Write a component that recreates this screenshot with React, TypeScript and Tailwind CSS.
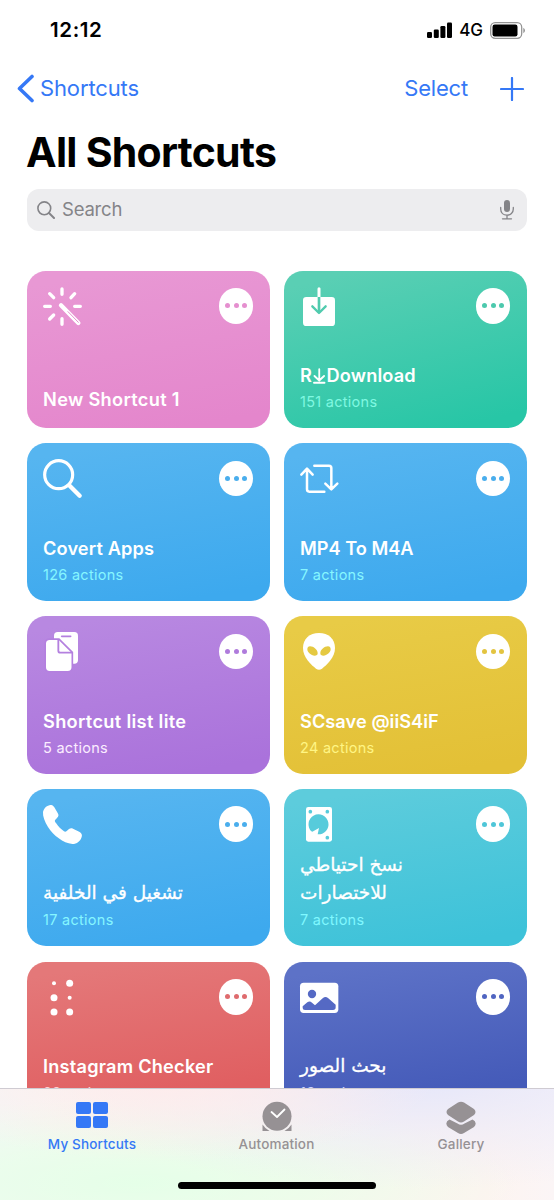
import type { ReactNode } from "react";

const inter = "font-['Inter','Liberation_Sans',sans-serif]";

function Glyph({ children }: { children: ReactNode }) {
  return (
    <svg viewBox="0 0 117 117" className="block h-[39px] w-[39px] overflow-visible" fill="white" stroke="none">
      {children}
    </svg>
  );
}

const round = { fill: "none", strokeLinecap: "round", strokeLinejoin: "round" } as const;

const Wand = () => (
  <Glyph>
    <path {...round} stroke="white" strokeWidth="10" d="M57 6V22M57 95V112M5 58H22M95 58H112M20 20L32 32M95 20L84 32M32 84L20 96" />
    <path {...round} stroke="white" strokeWidth="13" d="M54 55L106 108" />
    <path {...round} stroke="#e68fcf" strokeWidth="3" d="M75 74L106 106" />
  </Glyph>
);

const Download = () => (
  <Glyph>
    <rect x="9" y="30" width="96" height="87" rx="10" />
    <path {...round} stroke="white" strokeWidth="9" d="M57 5V30" />
    <path fill="none" stroke="#50cbae" strokeWidth="8" d="M57 30V78" />
    <path {...round} stroke="#50cbae" strokeWidth="7" d="M37 58L57 78L77 58" />
  </Glyph>
);

const Magnifier = () => (
  <Glyph>
    <circle cx="47" cy="47" r="42" fill="none" stroke="white" strokeWidth="9.5" />
    <path {...round} stroke="white" strokeWidth="13" d="M80 80L110 110" />
  </Glyph>
);

const Repeat = () => (
  <Glyph>
    <path {...round} stroke="white" strokeWidth="7.500" d="M4 47L21 29L38 47M21 30V91Q21 98 28 98H73M43 20H87Q94 20 94 27V90M76 74L94 91L112 74" />
  </Glyph>
);

const Docs = () => (
  <Glyph>
    <rect x="33" y="0" width="72" height="95" rx="11" />
    <path {...round} stroke="#b480df" strokeWidth="5" d="M56 13H83" />
    <path stroke="#b480df" strokeWidth="5" d="M20 21.500H48L88 61V106Q88 119.500 74 119.500H20Q6.500 119.500 6.500 106V35Q6.500 21.500 20 21.500Z" />
    <path {...round} stroke="#b480df" strokeWidth="5.500" d="M46 24V56Q46 62 52 62H86" />
  </Glyph>
);

const Alien = () => (
  <Glyph>
    <path d="M57 3C85 3 105 20 105 48C105 76 80 99 66 110Q57 116 48 110C34 99 9 76 9 48C9 20 29 3 57 3Z" />
    <path fill="#e5c941" d="M30 43C41 43 53 54 53 63C54 69 49 71 44 71C33 71 22 61 22 52C22 46 25 43 30 43ZM84 43C73 43 61 54 61 63C60 69 65 71 70 71C81 71 92 61 92 52C92 46 89 43 84 43Z" />
  </Glyph>
);

const Phone = () => (
  <Glyph>
    <path d="M23 0C28-1 31 2 34 7L44 24C48 30 47 34 42 39L37 44C34 47 36 50 39 54C46 65 54 72 63 79C66 81 69 80 72 77L78 72C82 69 86 69 90 71L110 81C116 85 118 90 116 96C112 109 102 117 88 117C60 114 32 92 15 66C5 50-1 34 0 21C3 9 12 1 23 0Z" />
  </Glyph>
);

const Disk = () => (
  <Glyph>
    <rect x="18" y="6" width="78" height="104" rx="7" />
    <g fill="#57cbdb">
      <circle cx="31" cy="20" r="5.500" />
      <circle cx="82" cy="20" r="5.500" />
      <circle cx="82" cy="98" r="5.500" />
      <path d="M34 79A30 30 0 1 1 53 88L57 69L37 80Z" />
    </g>
  </Glyph>
);

const Braille = () => (
  <Glyph>
    <circle cx="33" cy="16" r="6" />
    <circle cx="80" cy="16" r="10.500" />
    <circle cx="33" cy="59" r="10.500" />
    <circle cx="80" cy="59" r="6" />
    <circle cx="33" cy="102" r="10.500" />
    <circle cx="80" cy="102" r="10.500" />
  </Glyph>
);

const Picture = () => (
  <Glyph>
    <rect x="0" y="14" width="115" height="91" rx="11" />
    <circle cx="36" cy="48" r="12.500" fill="#5569c4" />
    <path fill="#5569c4" d="M8 85L22 73Q29 67 36 74L45 82L68 61Q76 54 84 60L107 80V88Q107 96 99 96H15Q8 96 8 90Z" />
  </Glyph>
);

type Card = {
  name: string;
  size: string;
  label: ReactNode;
  count?: string;
  countColor?: string;
  bg: string;
  dots: string;
  icon: ReactNode;
};

const latin = "text-[18.200px] leading-[27px] font-semibold";
const arabic = "font-['DejaVu_Sans',sans-serif] text-[18.500px] leading-[28px] font-normal [-webkit-text-stroke:0.3px_white]";

const DownArrow = () => (
  <svg viewBox="0 0 13 16" className="mx-[1px] inline-block h-[16px] w-[12.500px] align-[-2px]" fill="none" stroke="white" strokeWidth="1.900" strokeLinecap="round" strokeLinejoin="round">
    <path d="M6.500 1V12.500M1.500 8L6.500 12.700L11.500 8M1 15H12" />
  </svg>
);

const cards: Card[] = [
  { name: "new", size: `${latin} tracking-[0.320px]`, label: "New Shortcut 1", bg: "bg-[linear-gradient(170deg,#e898d4_8%,#e486cc_92%)]", dots: "bg-[#e58fcf]", icon: <Wand /> },
  { name: "download", size: `${latin} tracking-[0.150px]`, label: <>R<DownArrow />Download</>, count: "151 actions", countColor: "text-[#80f8e1]", bg: "bg-[linear-gradient(165deg,#5acfb4_8%,#27c6a6_92%)]", dots: "bg-[#4cc9ad]", icon: <Download /> },
  { name: "covert", size: `${latin} tracking-[0.130px]`, label: "Covert Apps", count: "126 actions", countColor: "text-[#86f6ff]", bg: "bg-[linear-gradient(170deg,#56b5f0_8%,#3da9ee_92%)]", dots: "bg-[#4aaeed]", icon: <Magnifier /> },
  { name: "mp4", size: `${latin} tracking-[0px]`, label: "MP4 To M4A", count: "7 actions", countColor: "text-[#86f6ff]", bg: "bg-[linear-gradient(170deg,#56b5f0_8%,#3da9ee_92%)]", dots: "bg-[#4aaeed]", icon: <Repeat /> },
  { name: "list", size: `${latin} tracking-[0.320px]`, label: "Shortcut list lite", count: "5 actions", countColor: "text-[#fbedff]", bg: "bg-[linear-gradient(170deg,#b888e1_8%,#aa72db_92%)]", dots: "bg-[#af7bdc]", icon: <Docs /> },
  { name: "scsave", size: `${latin} tracking-[0.050px]`, label: "SCsave @iiS4iF", count: "24 actions", countColor: "text-[#fff584]", bg: "bg-[linear-gradient(170deg,#e8cb46_8%,#e3c036_92%)]", dots: "bg-[#e3c440]", icon: <Alien /> },
  { name: "background", size: arabic, label: "تشغيل في الخلفية", count: "17 actions", countColor: "text-[#86f6ff]", bg: "bg-[linear-gradient(170deg,#56b5f0_8%,#3da9ee_92%)]", dots: "bg-[#4aaeed]", icon: <Phone /> },
  { name: "backup", size: arabic, label: <>نسخ احتياطي<br />للاختصارات</>, count: "7 actions", countColor: "text-[#80f8ff]", bg: "bg-[linear-gradient(170deg,#5dccdc_8%,#3dc2d9_92%)]", dots: "bg-[#4fc6d8]", icon: <Disk /> },
  { name: "instagram", size: `${latin} tracking-[0.220px]`, label: "Instagram Checker", count: "23 actions", countColor: "text-[#ffd0d0]", bg: "bg-[linear-gradient(170deg,#e47879_8%,#e05f61_80%)]", dots: "bg-[#df6b6e]", icon: <Braille /> },
  { name: "photos", size: arabic, label: "بحث الصور", count: "13 actions", countColor: "text-[#ccd5ff]", bg: "bg-[linear-gradient(170deg,#5d72c7_8%,#455bb9_80%)]", dots: "bg-[#5065c1]", icon: <Picture /> },
];

function ShortcutCard({ card }: { card: Card }) {
  return (
    <article className={`flex flex-col justify-between rounded-[19px] px-4 pt-4 ${card.count ? "pb-[15px]" : "pb-[15px]"} ${card.bg}`}>
      <div className="flex items-start justify-between">
        {card.icon}
        <button aria-label="More" className="mt-[1.500px] mr-[0.700px] flex h-[35.500px] w-[34.500px] items-center justify-center gap-[3.200px] rounded-[50%] bg-white">
          <i className={`h-[5px] w-[5px] rounded-full ${card.dots}`} />
          <i className={`h-[5px] w-[5px] rounded-full ${card.dots}`} />
          <i className={`h-[5px] w-[5px] rounded-full ${card.dots}`} />
        </button>
      </div>
      <div>
        <h2 className={`whitespace-nowrap text-white ${card.size}`}>{card.label}</h2>
        {card.count && <p className={`mt-[2px] text-[14.500px] leading-[22px] tracking-[0.280px] ${card.countColor}`}>{card.count}</p>}
      </div>
    </article>
  );
}

export default function App() {
  return (
    <div className={`flex h-[1200px] w-[554px] flex-col overflow-hidden bg-white text-black ${inter}`}>
      <header className="flex h-[60px] shrink-0 items-center justify-between pr-[29px] pl-[50px]">
        <span className="pt-[1px] text-[20.500px] font-semibold tracking-[0.600px]">12:12</span>
        <div className="flex items-center">
          <svg viewBox="0 0 25 17" className="h-[17px] w-[25px]">
            <rect x="0" y="10" width="5" height="6" rx="1.200" />
            <rect x="6.800" y="7.500" width="5" height="8.500" rx="1.200" />
            <rect x="13.400" y="4" width="5" height="12" rx="1.200" />
            <rect x="20" y="0.500" width="5" height="15.500" rx="1.200" />
          </svg>
          <span className="mx-[7px] pt-[2px] text-[17px] font-medium">4G</span>
          <svg viewBox="0 0 35 17" className="h-[17px] w-[35px]">
            <rect x="0.700" y="0.700" width="31" height="15.600" rx="4.500" fill="white" stroke="#949494" strokeWidth="1.300" />
            <rect x="2.500" y="2.500" width="25" height="12" rx="2.200" />
            <path d="M33.300 5.800Q35 7 35 8.500T33.300 11.200Z" fill="#949494" />
          </svg>
        </div>
      </header>

      <nav className="flex h-[57px] shrink-0 items-center justify-between pr-[30px] pl-[17px] text-[#3578f6]">
        <a className="flex items-center gap-[6px] text-[22px] tracking-[-0.130px]">
          <svg viewBox="0 0 17 29" className="h-[29px] w-[17px]" fill="none" stroke="currentColor" strokeWidth="3.600" strokeLinecap="round" strokeLinejoin="round">
            <path d="M15 2.500L2.500 14.500L15 26.500" />
          </svg>
          Shortcuts
        </a>
        <div className="flex items-center gap-[32px] text-[22px] tracking-[-0.200px]">
          <span>Select</span>
          <svg viewBox="0 0 24 24" className="h-6 w-6" fill="none" stroke="currentColor" strokeWidth="2.200" strokeLinecap="round">
            <path d="M12 1V23M1 12H23" />
          </svg>
        </div>
      </nav>

      <h1 className="flex h-[72px] shrink-0 items-center pl-[26px] text-[41px] font-bold tracking-[-0.720px]">All Shortcuts</h1>

      <label className="mx-[27px] flex h-[41.500px] shrink-0 items-center rounded-[12px] bg-[#ededef] px-[10px] text-[#848488]">
        <svg viewBox="0 0 18 18" className="h-[18px] w-[18px]" fill="none" stroke="currentColor" strokeWidth="1.600" strokeLinecap="round">
          <circle cx="7.300" cy="7.300" r="6.400" />
          <path strokeWidth="2" d="M12 12L17 17" />
        </svg>
        <span className="ml-[7px] flex-1 pt-[1px] text-[18.500px] tracking-[-0.200px]">Search</span>
        <svg viewBox="0 0 14 21" className="mr-[3px] h-[21px] w-[14px]" fill="none" stroke="currentColor" strokeWidth="1.300" strokeLinecap="round">
          <rect x="4" y="1" width="6" height="12" rx="3" fill="currentColor" stroke="none" />
          <path d="M0.700 8.500V10C0.700 14 3.500 16.200 7 16.200S13.300 14 13.300 10V8.500M7 16.500V19.800M2.500 19.800H11.500" />
        </svg>
      </label>

      <main className="mt-[40px] grid min-h-0 flex-1 auto-rows-[157.500px] grid-cols-2 gap-x-[14px] gap-y-[15.300px] overflow-hidden px-[27px]">
        {cards.map((card) => (
          <ShortcutCard key={card.name} card={card} />
        ))}
      </main>

      <footer className="flex h-[112px] shrink-0 flex-col items-center justify-between border-t border-[#cfcbd2] bg-[radial-gradient(ellipse_at_30%_-15%,#ffebeb_0%,#ffecea80_25%,transparent_50%),radial-gradient(ellipse_at_75%_-15%,#e4e6fb_0%,#e9e9fb80_35%,transparent_65%),radial-gradient(ellipse_at_25%_85%,#e5ffe8_0%,#e8ffe9bb_30%,transparent_65%),linear-gradient(90deg,#f5f6f7,#fdf5ee_50%,#fdf4f0_88%,#fbf5f6)] pb-[11px] text-[13.500px] font-medium text-[#969194]">
        <div className="flex w-full pt-[12px]">
          <a className="flex w-[184px] flex-col items-center text-[#3578f6]">
            <svg viewBox="0 0 32 33" className="h-[33px] w-[32px]" fill="currentColor">
              <rect x="0" y="1" width="15" height="12" rx="2" />
              <rect x="17" y="1" width="15" height="12" rx="2" />
              <rect x="0" y="15" width="15" height="12" rx="2" />
              <rect x="17" y="15" width="15" height="12" rx="2" />
            </svg>
            <span className="tracking-[0.160px]">My Shortcuts</span>
          </a>
          <a className="flex w-[185px] flex-col items-center">
            <svg viewBox="0 0 30 33" className="h-[33px] w-[30px]" fill="currentColor">
              <path d="M0.500 23.500V30H7.500Q3 27.500 0.500 23.500ZM29.500 23.500V30H22.500Q27 27.500 29.500 23.500Z" />
              <circle cx="15" cy="15.300" r="14.500" />
              <path d="M9.500 11L15 16L22.500 8.500" fill="none" stroke="white" strokeWidth="1.800" strokeLinecap="round" strokeLinejoin="round" />
            </svg>
            <span className="tracking-[0.160px]">Automation</span>
          </a>
          <a className="flex w-[184px] flex-col items-center">
            <svg viewBox="0 0 30 33" className="h-[33px] w-[30px]" fill="currentColor">
              <path d="M12 1.500Q15 0 18 1.500L28 8Q31 11 28 14L18 20.500Q15 22.500 12 20.500L2 14Q-1 11 2 8Z" />
              <path d="M3.500 18.500L11.500 22.500Q15 25 18.500 22.500L26.500 18.500Q32 21.500 28 26L18 32Q15 34 12 32L2 26Q-2 21.500 3.500 18.500Z" />
            </svg>
            <span className="tracking-[0.160px]">Gallery</span>
          </a>
        </div>
        <div className="h-[7px] w-[198px] rounded-full bg-black" />
      </footer>
    </div>
  );
}
